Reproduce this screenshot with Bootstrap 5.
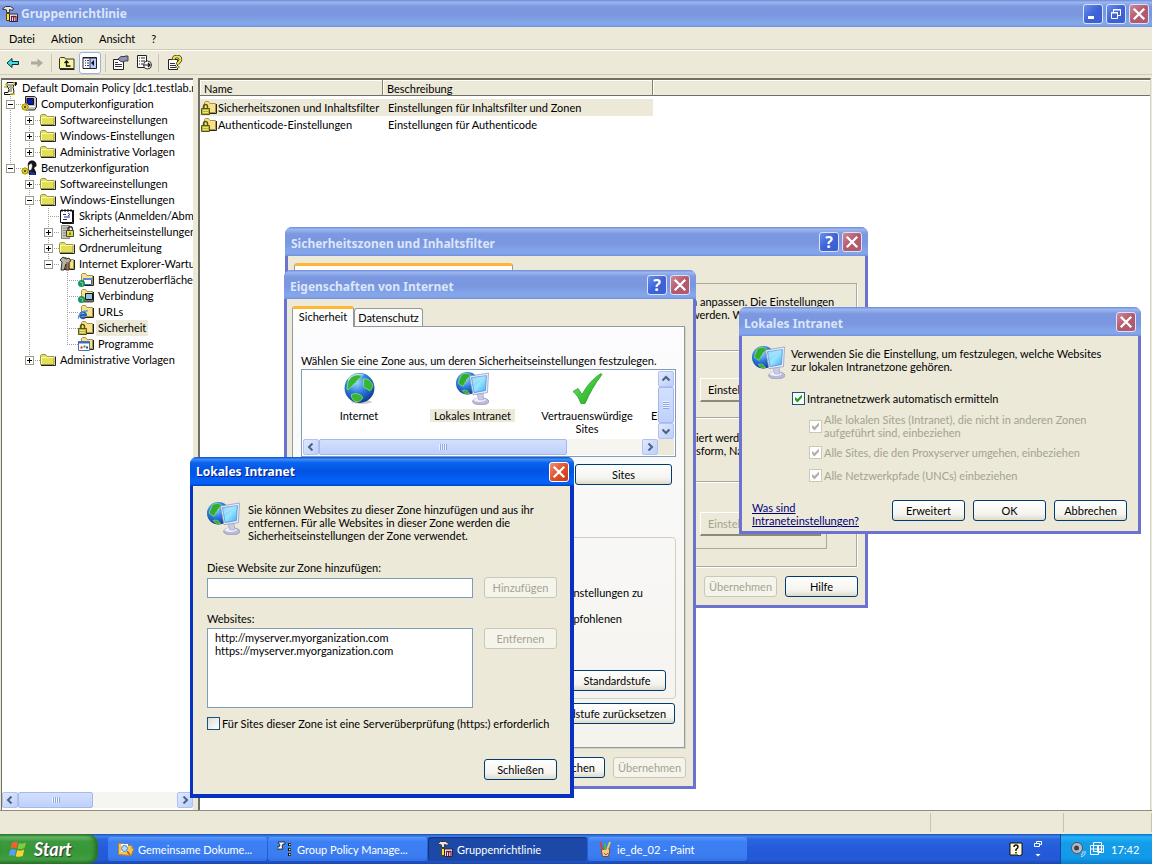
<!DOCTYPE html>
<html lang="de">
<head>
<meta charset="utf-8">
<meta name="viewport" content="width=device-width, initial-scale=1">
<title>Gruppenrichtlinie</title>
<link rel="stylesheet" href="https://cdn.jsdelivr.net/npm/bootstrap@5.3.0/dist/css/bootstrap.min.css">
<style>
:root{--face:#ece9d8;--line:#aca899;--ink:#000;--off:#a5a292}
body{font:11px/13px Lato,"Liberation Sans",sans-serif;font-variant-ligatures:none;color:var(--ink);background:var(--face);overflow:hidden}
button,input{font:inherit;font-variant-ligatures:none}
svg{flex:none;display:block}
/* title bars */
.capbar{height:29px;padding:0 5px;background:linear-gradient(#6f8bd8,#9bb6ef 8%,#7b98e0 24%,#7a96df 55%,#83a6ea 82%,#84a4ea 92%,#7290dc);color:#dce6fa;font:bold 12px/16px "Noto Sans",sans-serif}
.capbar.live{background:linear-gradient(#0a4fd0,#3c8df8 8%,#0b62ee 20%,#0054e4 50%,#0462f8 82%,#0360f2 92%,#0040b8);color:#fff;text-shadow:1px 1px #0a1883}
.cap{width:20px;height:20px;padding:0;border:1px solid #dbe3fa;border-radius:3px;background:linear-gradient(135deg,#6a90ee,#3f63d6 50%,#3a5fd2);display:flex;align-items:center;justify-content:center}
.cap.shut{background:linear-gradient(135deg,#cc8a96,#b4596c 50%,#b05a70)}
.live .cap.shut{border-color:#fff;background:linear-gradient(135deg,#f0906f,#e0502c 50%,#c83a12)}
/* menu and tool bar */
.menus{height:23px;padding-left:9px;gap:16px;border-bottom:1px solid #cfcbb8}
.menus a{color:#000;text-decoration:none}
.tools{height:25px;padding:0 5px;border-top:1px solid #fff;border-bottom:1px solid #cfcbb8}
.tool{border:0;background:none;padding:0;width:24px;height:22px;display:flex;align-items:center;justify-content:center}
.tool.on{border:1px solid #98b5e2;border-radius:3px;background:#fff;width:22px}
.tsep{width:1px;height:18px;background:#c9c5b2;margin:0 8px}
/* panes */
.panes{min-height:0;padding:3px 1px 0 1px}
.pane{background:#fff;border:solid #716f64;border-width:2px 0 0 2px}
.left{width:192px;border-width:2px 0 0 1px;overflow:hidden}
.right{margin-left:5px;border-right:1px solid #d8d5c6}
.node{height:16px;white-space:nowrap}
.guide{width:19px;height:16px;flex:none;position:relative;--d:repeating-linear-gradient(#a0a0a0 0 1px,#fff 1px 2px);--h:repeating-linear-gradient(90deg,#a0a0a0 0 1px,#fff 1px 2px)}
.guide.v{background:var(--d) 8px 0/1px 100% no-repeat}
.guide.t{background:var(--h) 8px 8px/11px 1px no-repeat,var(--d) 8px 0/1px 100% no-repeat}
.guide.e{background:var(--h) 8px 8px/11px 1px no-repeat,var(--d) 8px 0/1px 8px no-repeat}
.guide.p::before,.guide.m::before{content:"";position:absolute;left:4px;top:4px;width:9px;height:9px;border:1px solid #9a9a8c;background:linear-gradient(#000,#000) 1px 3px/5px 1px no-repeat,#fff}
.guide.p::before{background:linear-gradient(#000,#000) 1px 3px/5px 1px no-repeat,linear-gradient(#000,#000) 3px 1px/1px 5px no-repeat,#fff}
.ic{width:18px;flex:none}
.lbl{padding:1px 2px 2px}
.pick{background:var(--face)}
.list{border-collapse:separate;border-spacing:0;table-layout:fixed;width:100%}
.list th{font-weight:400;height:16px;padding:1px 4px 0;background:var(--face);border-right:1px solid #84826f;box-shadow:inset 1px 1px #fff;border-bottom:1px solid #716f64}
.list th:last-child{border-right:0}
.list td{height:17px;padding:0 4px 0 5px;white-space:nowrap}
.list td:first-child{padding-left:1px}
.list .gap td{height:3px;padding:0}
.sb{background:#f6f5f0}
.sbb{width:16px;height:16px;padding:0;border:1px solid #b0c2f2;border-radius:2px;background:linear-gradient(135deg,#e0e9fd,#bccffa);display:flex;align-items:center;justify-content:center}
.thumb{border:1px solid #a4b8ee;border-radius:2px;background:linear-gradient(#d3dffd,#bfd0fb);display:flex;align-items:center;justify-content:center}
.grip{width:8px;height:6px;background:repeating-linear-gradient(90deg,#eef4fe 0 1px,#8ea8e6 1px 2px)}
.grip.up{width:6px;height:8px;background:repeating-linear-gradient(#eef4fe 0 1px,#8ea8e6 1px 2px)}
.status{height:24px;border-top:1px solid #8f8c7d;padding-top:2px}
.status div{border-right:1px solid #c8c4b2;height:19px}
/* task bar */
.task{height:30px;background:linear-gradient(#1f4fae,#3b80ee 8%,#2a66dd 18%,#235bdb 50%,#2459d8 85%,#1c47b0)}
.start{width:98px;border:0;border-radius:0 10px 10px 0;padding:0 8px;background:linear-gradient(#2c7a2c,#67b867 10%,#3c9a3c 25%,#379637 60%,#3f9f3f 85%,#2b742b);color:#fff;font:italic bold 18px/20px Lato,sans-serif;text-shadow:1px 1px 1px #333;box-shadow:inset -3px 0 4px #2a6b2a}
.tb{flex:0 1 159px;height:24px;padding:0 9px;border:0;border-radius:3px;background:linear-gradient(#5a96f8,#3c80f5 20%,#3b7df0 80%,#3272e4);color:#fff;white-space:nowrap;gap:4px;margin-right:1px}
.tb.on{background:#1c49a8;box-shadow:inset 1px 1px 1px #123480}
.tray{width:92px;background:linear-gradient(#0c6fd0,#22b4f4 10%,#149ce8 30%,#129aea 80%,#0d7cc8);color:#fff;border-left:1px solid #0d4c9c;padding-left:9px}
/* dialogs */
.dlg{position:absolute;isolation:isolate;background:var(--face);border:solid #6c72d0;border-width:0 3px 3px;border-radius:7px 7px 0 0;display:flex;flex-direction:column}
.dlg .capbar{border-radius:7px 7px 0 0;margin:0 -3px;flex:none}
.dlg.act{border:solid #0831c4;border-width:0 4px 4px 3px}
.dlg.act .capbar{margin:0 -4px 0 -3px}
.xp{height:21px;width:73px;padding:0;border:1px solid #003c74;border-radius:3px;background:linear-gradient(#fff,#f4f3ee 70%,#dedacb);color:#000;font-size:11px;line-height:13px;white-space:nowrap}
.xp:disabled{border-color:#c9c7ba;background:#f5f4ea;color:var(--off);opacity:1}
.flatbtn{height:24px;width:121px;border:1px solid #fff;border-right-color:#716f64;border-bottom:2px solid #8d8a7b;background:var(--face);padding:0 7px;text-align:left;white-space:nowrap}
.flatbtn:disabled{color:var(--off)}
.fld{border:1px solid #7f9db9;background:#fff;border-radius:0;padding:0 6px;width:100%}
.ck{appearance:none;width:13px;height:13px;margin:0;border:1px solid #1c5180;background:linear-gradient(135deg,#dcdcd7,#fff);flex:none}
.ck:checked{background:url("data:image/svg+xml,%3Csvg xmlns='http://www.w3.org/2000/svg' viewBox='0 0 11 11'%3E%3Cpath d='M2 4v3l2.500 2.500L9 4.500v-3L4.500 6z' fill='%2321a121'/%3E%3C/svg%3E"),#fbfbf8}
.ck:disabled{border-color:#cac8bb;background:url("data:image/svg+xml,%3Csvg xmlns='http://www.w3.org/2000/svg' viewBox='0 0 11 11'%3E%3Cpath d='M2 4v3l2.500 2.500L9 4.500v-3L4.500 6z' fill='%23b4b2a4'/%3E%3C/svg%3E"),#fff}
.dim{color:var(--off)}
.tabx{border:1px solid #919b9c;border-bottom:0;background:#fbfbf9;border-radius:3px 3px 0 0;padding:0;height:18px;text-align:center;white-space:nowrap}
.tabx.on{border-top:3px solid #ffb733;background:#fdfdfe;height:21px;margin-bottom:-1px;padding-bottom:4px;z-index:1;position:relative}
.sheet{border:1px solid #919b9c;background:linear-gradient(#fcfcfe,#f4f3ee);box-shadow:1px 1px #d6d3c2}
.zone{flex:none;border:0;background:none;padding:1px 0 0;text-align:center}
.rule{border-top:1px solid #aca899;box-shadow:inset 0 1px #fff}
.grp{border:1px solid #d0d0bf;border-radius:4px}
#w1{left:285px;top:227px;width:583px;height:381px}
#w2{left:284px;top:270px;width:412px;height:519px}
#w3{left:739px;top:307px;width:402px;height:227px}
#w4{left:190px;top:457px;width:384px;height:341px}
</style>
</head>
<body class="vh-100 d-flex flex-column">
<svg width="0" height="0" class="position-absolute" aria-hidden="true"><defs>
<radialGradient id="gb" cx=".4" cy=".3" r=".8"><stop offset="0" stop-color="#9fd8ff"/><stop offset=".45" stop-color="#2d7fe0"/><stop offset="1" stop-color="#0a2a80"/></radialGradient>
<linearGradient id="gs" x1="0" y1="0" x2="1" y2="1"><stop offset="0" stop-color="#5fc4fb"/><stop offset=".5" stop-color="#9be4ff"/><stop offset="1" stop-color="#3fa8f0"/></linearGradient>
<linearGradient id="gc" x1="0" y1="0" x2="1" y2="1"><stop offset="0" stop-color="#8be08b"/><stop offset=".5" stop-color="#3fc83a"/><stop offset="1" stop-color="#1f9c1f"/></linearGradient>
<symbol id="folder" viewBox="0 0 16 16"><path d="M.5 12.500v-9l1-1h4l1.500 2h7v8z" fill="#e2de58" stroke="#9c9640"/><path d="M1.500 5.500h12" stroke="#fbfab0"/><path d="M1.500 5v7" stroke="#fbfab0"/><path d="M1 13.500h14.500V4.500" fill="none" stroke="#222"/></symbol>
<symbol id="yf" viewBox="0 0 16 16"><path d="M3.500 12.500v-10l1-1h3l1.500 2h5.500v9z" fill="#f7e28a" stroke="#a8914a"/><path d="M4 13.500h11.500V4" fill="none" stroke="#222"/></symbol>
<symbol id="lock" viewBox="0 0 16 16"><use href="#yf"/><path d="M2.500 9V6.500a2 2 0 0 1 4 0V9" fill="none" stroke="#5a5610" stroke-width="1.500"/><path d="M.5 8.500h8v6h-8z" fill="#b9b432" stroke="#5a5610"/><path d="M2 10.500h5M2 12.500h5" stroke="#e8e68a"/></symbol>
<symbol id="scroll" viewBox="0 0 16 16"><path d="M5 2.500h9.500v2H12l-1 3 1 4-1 3H2.500v-2H6l1-3-2-4z" fill="#fffde0" stroke="#111"/><path d="M6 5h5M7 7h3M8 9h2M7 11h3" stroke="#555"/><path d="M3 4.500h3M2 7h3M12 2v3M8 14h5" stroke="#c8b820" stroke-width="1.500"/><path d="M13.500 3v3" stroke="#111"/></symbol>
<symbol id="pc" viewBox="0 0 16 16"><path d="M4.500 .5h9l2 1.500v9l-2 3h-9z" fill="#c4c4c4" stroke="#222"/><path d="M6 2.500h6.500v6H6z" fill="#0a1ab0" stroke="#111"/><path d="M8 10.500h6" stroke="#fff"/><circle cx="4" cy="11" r="3" fill="#f3ea4a" stroke="#6b6410"/><path d="M0 11h8M4 7v8M1 8l6 6M7 8l-6 6" stroke="#d8cc2c" stroke-width="1.200"/><circle cx="4" cy="11" r="1" fill="#333"/></symbol>
<symbol id="user" viewBox="0 0 16 16"><path d="M7 7C6 3 8 .5 11 .5c3 0 5 2.500 4.500 5.500L13 8l2 4v3H8z" fill="#161616"/><path d="M7.500 5l3-2 1 3-1 4-3 .5z" fill="#fff" stroke="#222" stroke-width=".6"/><path d="M9 11l5 2v2H9z" fill="#2030a0"/><circle cx="4" cy="11" r="3" fill="#f3ea4a" stroke="#6b6410"/><path d="M0 11h8M4 7v8M1 8l6 6M7 8l-6 6" stroke="#d8cc2c" stroke-width="1.200"/><circle cx="4" cy="11" r="1" fill="#333"/></symbol>
<symbol id="script" viewBox="0 0 16 16"><path d="M1.500 2.500h12v12h-12z" fill="#fff" stroke="#111"/><path d="M14.500 2v13.500H3M3 1v3M6 1v3M9 1v3M12 1v3" fill="none" stroke="#111"/><path d="M4 6.500h3M5 9h6M4 11.500h4" stroke="#2a2a9a"/><path d="M9 5l2 1.500-2 1.500" fill="none" stroke="#2a2a9a"/></symbol>
<symbol id="srv" viewBox="0 0 16 16"><path d="M2.500 1.500h8v13h-8z" fill="#c9c5bb" stroke="#8a867c"/><path d="M4 4h5M4 6.500h5M4 9h5M4 11.500h5" stroke="#888"/><path d="M9 7V5a2 2 0 0 1 4.500 0v2" fill="none" stroke="#333" stroke-width="1.300"/><path d="M7.500 6.500h7v6h-7z" fill="#e4dc3c" stroke="#444"/><path d="M11 8.500v2.500" stroke="#222"/></symbol>
<symbol id="ie" viewBox="0 0 16 16"><use href="#yf"/><path d="M1 4l3-3 3 2 3-1 2 3-2 1v8H7V8L5 14H2l1-8z" fill="#b9b3a4" stroke="#222" stroke-width=".9"/><path d="M8 6v8M10 7v7" stroke="#7a3c14"/></symbol>
<symbol id="fui" viewBox="0 0 16 16"><use href="#yf"/><path d="M5.500 6.500h8v6h-8z" fill="#fff" stroke="#47628e"/><path d="M5 7h9" stroke="#5d8bd8" stroke-width="2"/><circle cx="3.500" cy="11.500" r="3.500" fill="#1b8d74"/><path d="M2 10l3 1-1 3" fill="none" stroke="#6fdc5a"/></symbol>
<symbol id="fvb" viewBox="0 0 16 16"><use href="#yf"/><path d="M7.500 5.500h7v6h-7z" fill="#8cc4e8" stroke="#111"/><path d="M6 13.500h9" stroke="#555" stroke-width="2"/><circle cx="3.500" cy="11.500" r="3.500" fill="#1b8d74"/><path d="M2 10l3 1-1 3" fill="none" stroke="#6fdc5a"/></symbol>
<symbol id="furl" viewBox="0 0 16 16"><use href="#yf"/><path d="M2 11h6a3 3 0 1 0-1 2.500" fill="none" stroke="#1f62c8" stroke-width="2"/><path d="M0 15c0-4 5-9 10-8" fill="none" stroke="#3f8be8" stroke-width="1.200"/></symbol>
<symbol id="fprg" viewBox="0 0 16 16"><use href="#yf"/><path d="M.5 5.500h11v9H.5z" fill="#fff" stroke="#5a6ea0"/><path d="M0 6.500h12" stroke="#3f68c8" stroke-width="2"/><path d="M2.500 11.500h2" stroke="#c03020" stroke-width="2"/><path d="M5.500 10.500h2" stroke="#2a9a3a" stroke-width="2"/><path d="M8 11.500h2" stroke="#204ac0" stroke-width="2"/></symbol>
<symbol id="mmc" viewBox="0 0 16 16"><path d="M.5 3l3-2.500h5l3 2-1 2-3-1v3h-3V4z" fill="#e6e6e6" stroke="#333"/><path d="M4.500 7.500h3v7h-3z" fill="#f4e63a" stroke="#4c480c"/><path d="M7.500 15.500V8h8v7.500z" fill="#fff" stroke="#35202c"/><path d="M9.500 15v-4.500h4.500V15M11.700 10v5" stroke="#6c1a3c" stroke-width="1.300" fill="none"/></symbol>
<symbol id="globe" viewBox="0 0 32 32"><ellipse cx="18" cy="29" rx="10" ry="2" fill="#ccc"/><circle cx="16" cy="15.500" r="14.500" fill="url(#gb)"/><path d="M7 5c4-3 8-3 11-1-1 3-5 3-5 6-2 2-3 1-4 4-2 0-3 4-5 3 0-5 1-9 3-12zM8 22c4-2 8-1 11 2 0 3-3 5-6 5-3-1-5-3-5-7zM20 7c5-1 7 2 9 6-1 4-3 6-4 5-1-3-4-1-5-4z" fill="#36b636" stroke="#b8f27a" stroke-width=".6"/><path d="M5 8c3-5 9-7 15-5" fill="none" stroke="#e2f6ff" stroke-width="1.200" opacity=".7"/></symbol>
<symbol id="net" viewBox="0 0 32 32"><circle cx="11" cy="11" r="11" fill="url(#gb)"/><path d="M5 3c3-2 7-2 9 0-1 3-4 3-4 6-2 1-2 3-3 5-2-1-3-2-5-3zM6 18c3-1 6 0 7 3-2 1-5 0-7-3z" fill="#2fae2f" stroke="#b8f27a" stroke-width=".5"/><ellipse cx="24" cy="28.500" rx="8" ry="3.500" fill="#b9bad6" stroke="#8c8eb4" stroke-width=".6"/><ellipse cx="23" cy="27" rx="6" ry="2" fill="#f1f1fa"/><path d="M20 20l6-1 1 8h-5z" fill="#c9cae4" stroke="#9193ba" stroke-width=".5"/><path d="M13 4l18.500-3-1 19-14 2z" fill="#eceefa" stroke="#8d92bd" stroke-width=".7"/><path d="M15 5.500l14.500-2-1 14.500-11 2z" fill="url(#gs)" stroke="#2d80cc" stroke-width=".6"/><path d="M16 12l12-8v-.3L15.600 5.600z" fill="#fff" opacity=".25"/></symbol>
<symbol id="tick" viewBox="0 0 32 32"><path d="M2 19l5-3 4 6C16 13 22 6 30 1l1 1C24 11 19 20 14 31h-4C8 26 6 22 2 19z" fill="url(#gc)" stroke="#2aa02a" stroke-width=".8"/></symbol>
<symbol id="x" viewBox="0 0 12 12"><path d="M1.500 1.500l9 9m0-9l-9 9" stroke="#fff" stroke-width="2"/></symbol>
<symbol id="al" viewBox="0 0 8 8"><path d="M5.500 .5L2 4l3.500 3.500" fill="none" stroke="#4d6185" stroke-width="2"/></symbol>
<symbol id="ar" viewBox="0 0 8 8"><path d="M2.500 .5L6 4 2.500 7.500" fill="none" stroke="#4d6185" stroke-width="2"/></symbol>
<symbol id="au" viewBox="0 0 8 8"><path d="M.5 5.500L4 2l3.500 3.500" fill="none" stroke="#4d6185" stroke-width="2"/></symbol>
<symbol id="ad" viewBox="0 0 8 8"><path d="M.5 2.500L4 6l3.500-3.500" fill="none" stroke="#4d6185" stroke-width="2"/></symbol>
</defs></svg>

<header class="capbar d-flex align-items-center" style="height:27px;padding:0 3px 0 2px">
  <svg width="16" height="16"><use href="#mmc"/></svg><span class="flex-grow-1" style="margin-left:3px">Gruppenrichtlinie</span>
  <div class="d-flex" style="gap:3px">
    <button class="cap" aria-label="Minimieren"><svg width="12" height="12"><path d="M1 8h6v3H1z" fill="#fff"/></svg></button>
    <button class="cap" aria-label="Wiederherstellen"><svg width="12" height="12"><path d="M3.500 4V1.500h7v6H8M3 2h8M1.500 4.500h6v6h-6zM1 5h7" fill="none" stroke="#fff"/></svg></button>
    <button class="cap shut" aria-label="Schließen"><svg width="14" height="14"><use href="#x"/></svg></button>
  </div>
</header>
<nav class="menus d-flex align-items-center flex-shrink-0"><a href="#">Datei</a><a href="#">Aktion</a><a href="#">Ansicht</a><a href="#">?</a></nav>
<div class="tools d-flex align-items-center flex-shrink-0">
  <button class="tool" style="width:16px" aria-label="Zurück"><svg width="14" height="12"><path d="M1 6l5-4.500V4.500h6.500v3H6v3z" fill="#3fe0ea" stroke="#0a2a3a"/></svg></button>
  <button class="tool ms-1" aria-label="Vorwärts"><svg width="16" height="12"><path d="M14 6L8.500 1.500v3H2v3h6.500v3z" fill="#aeab9c"/></svg></button>
  <span class="tsep" style="margin-left:2px;margin-right:3px"></span>
  <button class="tool" aria-label="Aufwärts"><svg width="16" height="16"><path d="M.5 13.500v-10l1-1h4l1 1.500h8.500v9.500z" fill="#fbf7a0" stroke="#333"/><path d="M1 14.500h14.500" stroke="#222"/><path d="M11.500 11h-4V6M5.500 8l2-2 2 2" fill="none" stroke="#111" stroke-width="1.300"/></svg></button>
  <button class="tool on" aria-label="Struktur"><svg width="16" height="14"><path d="M1 1.500h13.500v11H1z" fill="#fff" stroke="#222"/><path d="M8 2h6v10H8z" fill="#b9cdf2"/><path d="M1 2h14" stroke="#222"/><path d="M3 4.500h1M3 7h1M3 9.500h1M5 4.500h2M5 7h2M5 9.500h2M8 2v10" stroke="#2a3a7a"/><path d="M12 4v6L9 7z" fill="#111"/></svg></button>
  <span class="tsep" style="margin:0 2px 0 4px"></span>
  <button class="tool" aria-label="Eigenschaften"><svg width="17" height="16"><path d="M1.500 4.500h10v10h-10z" fill="#fff" stroke="#222"/><path d="M3 7.500h3M3 9.500h7M3 11.500h7" stroke="#333"/><path d="M6 4l3-2.500 4 0V1h3v5h-3l-2 1-3-1z" fill="#8f93b8" stroke="#222" stroke-width=".8"/></svg></button>
  <button class="tool" aria-label="Liste exportieren"><svg width="17" height="17"><path d="M1.500 1.500h9v12h-9z" fill="#fff" stroke="#222"/><path d="M3 4h1M5 4h4M3 7h1M5 7h4M3 10h1M5 10h2" stroke="#222"/><circle cx="11.500" cy="11" r="4" fill="#fff" stroke="#333"/><path d="M8 11h6M12 9l2 2-2 2" fill="none" stroke="#111" stroke-width="1.200"/></svg></button>
  <span class="tsep" style="margin:0 4px 0 2px"></span>
  <button class="tool" aria-label="Hilfe"><svg width="16" height="16"><path d="M1.500 4.500h9v10h-9z" fill="#fff" stroke="#222"/><path d="M3 8.500h5M3 10.500h6M3 12.500h6" stroke="#333"/><path d="M6.500 4.500c0-4 7-4 7 0 0 2.500-3 2.500-3 5M10.500 11v2" fill="none" stroke="#333" stroke-width="3.500"/><path d="M6.500 4.500c0-4 7-4 7 0 0 2.500-3 2.500-3 5M10.500 11v2" fill="none" stroke="#f2e43a" stroke-width="2"/></svg></button>
</div>

<main class="panes d-flex flex-grow-1">
  <aside class="pane left d-flex flex-column flex-shrink-0">
    <div class="flex-grow-1">
      <div class="node d-flex align-items-center"><span class="ic"><svg width="16" height="16"><use href="#scroll"/></svg></span><span class="lbl">Default Domain Policy [dc1.testlab.net]</span></div>
      <div class="node d-flex align-items-center"><i class="guide t m"></i><span class="ic"><svg width="16" height="16"><use href="#pc"/></svg></span><span class="lbl">Computerkonfiguration</span></div>
      <div class="node d-flex align-items-center"><i class="guide v"></i><i class="guide t p"></i><span class="ic"><svg width="16" height="16"><use href="#folder"/></svg></span><span class="lbl">Softwareeinstellungen</span></div>
      <div class="node d-flex align-items-center"><i class="guide v"></i><i class="guide t p"></i><span class="ic"><svg width="16" height="16"><use href="#folder"/></svg></span><span class="lbl">Windows-Einstellungen</span></div>
      <div class="node d-flex align-items-center"><i class="guide v"></i><i class="guide e p"></i><span class="ic"><svg width="16" height="16"><use href="#folder"/></svg></span><span class="lbl">Administrative Vorlagen</span></div>
      <div class="node d-flex align-items-center"><i class="guide e m"></i><span class="ic"><svg width="16" height="16"><use href="#user"/></svg></span><span class="lbl">Benutzerkonfiguration</span></div>
      <div class="node d-flex align-items-center"><i class="guide"></i><i class="guide t p"></i><span class="ic"><svg width="16" height="16"><use href="#folder"/></svg></span><span class="lbl">Softwareeinstellungen</span></div>
      <div class="node d-flex align-items-center"><i class="guide"></i><i class="guide t m"></i><span class="ic"><svg width="16" height="16"><use href="#folder"/></svg></span><span class="lbl">Windows-Einstellungen</span></div>
      <div class="node d-flex align-items-center"><i class="guide"></i><i class="guide v"></i><i class="guide t"></i><span class="ic"><svg width="16" height="16"><use href="#script"/></svg></span><span class="lbl">Skripts (Anmelden/Abmelden)</span></div>
      <div class="node d-flex align-items-center"><i class="guide"></i><i class="guide v"></i><i class="guide t p"></i><span class="ic"><svg width="16" height="16"><use href="#srv"/></svg></span><span class="lbl">Sicherheitseinstellungen</span></div>
      <div class="node d-flex align-items-center"><i class="guide"></i><i class="guide v"></i><i class="guide t p"></i><span class="ic"><svg width="16" height="16"><use href="#folder"/></svg></span><span class="lbl">Ordnerumleitung</span></div>
      <div class="node d-flex align-items-center"><i class="guide"></i><i class="guide v"></i><i class="guide e m"></i><span class="ic"><svg width="16" height="16"><use href="#ie"/></svg></span><span class="lbl">Internet Explorer-Wartung</span></div>
      <div class="node d-flex align-items-center"><i class="guide"></i><i class="guide v"></i><i class="guide"></i><i class="guide t"></i><span class="ic"><svg width="16" height="16"><use href="#fui"/></svg></span><span class="lbl">Benutzeroberfläche</span></div>
      <div class="node d-flex align-items-center"><i class="guide"></i><i class="guide v"></i><i class="guide"></i><i class="guide t"></i><span class="ic"><svg width="16" height="16"><use href="#fvb"/></svg></span><span class="lbl">Verbindung</span></div>
      <div class="node d-flex align-items-center"><i class="guide"></i><i class="guide v"></i><i class="guide"></i><i class="guide t"></i><span class="ic"><svg width="16" height="16"><use href="#furl"/></svg></span><span class="lbl">URLs</span></div>
      <div class="node d-flex align-items-center"><i class="guide"></i><i class="guide v"></i><i class="guide"></i><i class="guide t"></i><span class="ic"><svg width="16" height="16"><use href="#lock"/></svg></span><span class="lbl pick">Sicherheit</span></div>
      <div class="node d-flex align-items-center"><i class="guide"></i><i class="guide v"></i><i class="guide"></i><i class="guide e"></i><span class="ic"><svg width="16" height="16"><use href="#fprg"/></svg></span><span class="lbl">Programme</span></div>
      <div class="node d-flex align-items-center"><i class="guide"></i><i class="guide e p"></i><span class="ic"><svg width="16" height="16"><use href="#folder"/></svg></span><span class="lbl">Administrative Vorlagen</span></div>
    </div>
    <div class="sb d-flex" style="margin-bottom:2px">
      <button class="sbb" aria-label="Nach links"><svg width="8" height="8"><use href="#al"/></svg></button>
      <div class="thumb" style="width:75px"><i class="grip"></i></div>
      <button class="sbb ms-auto" aria-label="Nach rechts"><svg width="8" height="8"><use href="#ar"/></svg></button>
    </div>
  </aside>
  <section class="pane right flex-grow-1">
    <table class="list">
      <colgroup><col style="width:183px"><col style="width:270px"><col></colgroup>
      <thead><tr><th>Name</th><th>Beschreibung</th><th></th></tr></thead>
      <tbody>
        <tr class="gap"><td></td><td></td><td></td></tr>
        <tr><td class="pick"><div class="d-flex align-items-center"><svg width="16" height="16"><use href="#lock"/></svg><span style="padding-left:1px">Sicherheitszonen und Inhaltsfilter</span></div></td><td class="pick">Einstellungen für Inhaltsfilter und Zonen</td><td></td></tr>
        <tr><td><div class="d-flex align-items-center"><svg width="16" height="16"><use href="#lock"/></svg><span style="padding-left:1px">Authenticode-Einstellungen</span></div></td><td>Einstellungen für Authenticode</td><td></td></tr>
      </tbody>
    </table>
  </section>
</main>
<div class="status d-flex flex-shrink-0"><div class="flex-grow-1"></div><div style="width:133px"></div><div style="width:88px"></div></div>

<footer class="task d-flex align-items-stretch flex-shrink-0">
  <button class="start d-flex align-items-center"><svg width="20" height="20"><path d="M4 4q3-2 6-.5L8.500 9.500Q6 8 2.500 9.500z" fill="#f0622c"/><path d="M11 4q3 1.500 7-.5L16.500 9q-3.500 2-7 .5z" fill="#7ccc3c"/><path d="M2.200 11q3-1.500 6-.3L6.700 17Q4 15.500.7 17z" fill="#5b9cf4"/><path d="M9.300 11q3.500 1.500 7-.4L14.700 17q-3.500 1.500-7 .3z" fill="#fcd232"/></svg><span style="margin-left:6px">Start</span></button>
  <nav class="d-flex align-items-center flex-grow-1" style="padding-left:10px">
    <button class="tb d-flex align-items-center"><svg width="17" height="16"><path d="M1.500 13.500v-11h5l1.500 2h7v3l2 0-3 7z" fill="#f5c451" stroke="#b8842a"/><path d="M4 3h7v8H4z" fill="#fff"/><circle cx="7.500" cy="7.500" r="3" fill="#b5dcf8" stroke="#4a7ab8"/><path d="M10 10l3 4" stroke="#b8621a" stroke-width="1.500"/></svg>Gemeinsame Dokume...</button>
    <button class="tb d-flex align-items-center"><svg width="16" height="16"><path d="M1 1h7v2H6l-1 2 1 3H0V6h2L3 4z" fill="#fff" stroke="#111" stroke-width=".8"/><path d="M12.500 2v14" stroke="#111" stroke-width="3" stroke-dasharray="3 2"/><path d="M12 3.500h1.500M12 8.500h1.500M12 13.500h1.500" stroke="#e9f14a" stroke-width="1.500"/></svg>Group Policy Manage...</button>
    <button class="tb on d-flex align-items-center"><svg width="16" height="16"><use href="#mmc"/></svg>Gruppenrichtlinie</button>
    <button class="tb d-flex align-items-center"><svg width="16" height="16"><path d="M4 8h9l-1.500 7.500h-6z" fill="#e9c99a" stroke="#7c4b20"/><path d="M6 9L3 1" stroke="#d8452c" stroke-width="2"/><path d="M8 9V2" stroke="#4bb34b" stroke-width="2"/><path d="M10 9l3-8" stroke="#f1d24b" stroke-width="2"/><path d="M7 12l2 2 2-2" stroke="#d8452c" fill="none"/></svg>ie_de_02 - Paint</button>
    <svg class="ms-auto" width="14" height="14"><path d="M1 1h12v12h-1l-2 1-1-1H1z" fill="#fffbd8" stroke="#111"/><path d="M5 5q0-2 2-2t2 2q0 1-2 2.500V9M7 10v1.500" fill="none" stroke="#111" stroke-width="1.500"/></svg>
    <svg width="10" height="18" style="margin:0 17px 0 10px"><path d="M3.500 3V1.500h5v3H7M1.500 3.500h5v3h-5z" fill="none" stroke="#fff"/><path d="M2.500 14h5L5 16.500z" fill="#fff"/></svg>
  </nav>
  <div class="tray d-flex align-items-center"><svg width="17" height="16"><circle cx="7" cy="7" r="5.500" fill="#b9bcc4" stroke="#4c5260"/><circle cx="6.500" cy="7" r="2.500" fill="#39404e"/><path d="M13 10q1 3-2 4M15 10q1 5-4 5.500" fill="none" stroke="#d5e2f4"/></svg><svg width="17" height="16" style="margin-left:2px"><path d="M4.500 1.500h8v9h-8zM1.500 4.500h8v9h-8zM8.500 4.500h6v7h-6zM2 8h12" fill="none" stroke="#fff"/></svg><span style="margin-left:5px">17:42</span></div>
</footer>

<section class="dlg" id="w1">
  <div class="capbar d-flex align-items-center" style="padding-left:6px;padding-right:6px"><span class="flex-grow-1 pt-1">Sicherheitszonen und Inhaltsfilter</span><div class="d-flex" style="gap:3px"><button class="cap" aria-label="Hilfe"><span style="color:#fff;font-size:16px">?</span></button><button class="cap shut" aria-label="Schließen"><svg width="14" height="14"><use href="#x"/></svg></button></div></div>
  <div class="d-flex" style="padding:7px 0 0 6px"><button class="tabx on" style="width:219px;padding-bottom:0">Sicherheitszonen und Datenschutzeinstellungen</button></div>
  <div class="ms-2 text-nowrap" style="border:1px solid #aca899;box-shadow:1px 1px #fff;width:561px;height:284px;padding:11px 29px 0 0">
    <div style="padding-left:394px;height:55px">n anpassen. Die Einstellungen<br>werden. Wählen Sie</div>
    <div class="rule" style="border-right:1px solid #aca899;height:199px;border-bottom:1px solid #aca899;padding-left:403px">
      <button class="flatbtn" style="margin-top:27px">Einstellungen ändern...</button>
      <div class="rule" style="margin:15px 0 0 -403px;height:64px;padding:13px 0 0 395px">tiert werden,<br>tsform, Name</div>
      <div class="rule" style="margin-left:-403px;padding:30px 0 0 403px"><button class="flatbtn" disabled>Einstellungen ändern...</button></div>
    </div>
  </div>
  <div class="d-flex justify-content-end gap-2" style="padding:9px 7px 0 0"><button class="xp" disabled>Übernehmen</button><button class="xp">Hilfe</button></div>
</section>

<section class="dlg" id="w2">
  <div class="capbar d-flex align-items-center" style="padding-left:6px;padding-right:6px"><span class="flex-grow-1 pt-1">Eigenschaften von Internet</span><div class="d-flex" style="gap:3px"><button class="cap" aria-label="Hilfe"><span style="color:#fff;font-size:16px">?</span></button><button class="cap shut" aria-label="Schließen"><svg width="14" height="14"><use href="#x"/></svg></button></div></div>
  <div class="d-flex align-items-end" style="padding:7px 0 0 5px"><button class="tabx on" style="width:62px">Sicherheit</button><button class="tabx" style="width:69px">Datenschutz</button></div>
  <div class="sheet" style="margin:0 8px 0 5px;height:422px;padding:27px 8px 0">
    <div>Wählen Sie eine Zone aus, um deren Sicherheitseinstellungen festzulegen.</div>
    <div class="fld d-flex" style="height:88px;padding:1px;margin-top:2px">
      <div class="d-flex flex-column flex-grow-1" style="min-width:0">
        <div class="d-flex align-items-start overflow-hidden flex-grow-1">
          <button class="zone" style="width:112px"><svg class="mx-auto" width="33" height="33"><use href="#globe"/></svg><span class="d-inline-block px-1 mt-1">Internet</span></button>
          <button class="zone" style="width:115px"><svg class="mx-auto" width="33" height="33"><use href="#net"/></svg><span class="d-inline-block px-1 mt-1 pick">Lokales Intranet</span></button>
          <button class="zone" style="width:114px"><svg class="mx-auto" width="32" height="33"><use href="#tick"/></svg><span class="d-inline-block px-1 mt-1">Vertrauenswürdige<br>Sites</span></button>
          <button class="zone" style="width:115px;padding-left:7px;text-align:left"><svg width="1" height="33"></svg><span class="d-inline-block mt-1">Eingeschränkte</span></button>
        </div>
        <div class="sb d-flex flex-shrink-0"><button class="sbb" aria-label="Nach links"><svg width="8" height="8"><use href="#al"/></svg></button><div class="thumb" style="width:248px"><i class="grip"></i></div><button class="sbb ms-auto" aria-label="Nach rechts"><svg width="8" height="8"><use href="#ar"/></svg></button></div>
      </div>
      <div class="d-flex flex-column sb" style="width:16px"><button class="sbb" aria-label="Nach oben"><svg width="8" height="8"><use href="#au"/></svg></button><div class="thumb flex-grow-1"><i class="grip up"></i></div><button class="sbb" aria-label="Nach unten"><svg width="8" height="8"><use href="#ad"/></svg></button><div style="height:16px;background:#ece9d8"></div></div>
    </div>
    <div class="text-end" style="padding:7px 4px 0 0"><button class="xp" style="width:97px">Sites</button></div>
    <div class="grp text-end" style="margin-top:52px;height:162px;padding:48px 9px 0">
      <div style="padding-right:23px">Wählen Sie eine Stufe, um die Einstellungen zu</div>
      <div style="padding:13px 44px 0 0">Verwenden Sie die empfohlenen</div>
      <button class="xp" style="width:98px;margin-top:45px">Standardstufe</button>
    </div>
    <div class="text-end pt-1" style="padding-right:1px"><button class="xp" style="width:224px">Alle Zonen auf Standardstufe zurücksetzen</button></div>
  </div>
  <div class="d-flex justify-content-end gap-2" style="padding:9px 7px 0 0"><button class="xp">Abbrechen</button><button class="xp" disabled>Übernehmen</button></div>
</section>

<section class="dlg" id="w3">
  <div class="capbar d-flex align-items-center"><span class="flex-grow-1 pt-1">Lokales Intranet</span><button class="cap shut" aria-label="Schließen"><svg width="14" height="14"><use href="#x"/></svg></button></div>
  <div class="d-flex flex-column flex-grow-1" style="padding:10px 11px 10px 10px">
    <div class="d-flex"><svg width="33" height="33"><use href="#net"/></svg><div style="padding:1px 0 0 6px">Verwenden Sie die Einstellung, um festzulegen, welche Websites<br>zur lokalen Intranetzone gehören.</div></div>
    <div class="d-flex align-items-center" style="margin:13px 0 0 40px;gap:2px"><input class="ck" type="checkbox" id="c1" checked><label for="c1">Intranetnetzwerk automatisch ermitteln</label></div>
    <div class="dim d-flex flex-column" style="margin:8px 0 0 57px">
      <div class="d-flex align-items-center" style="gap:2px"><input class="ck" type="checkbox" id="c2" checked disabled><label for="c2">Alle lokalen Sites (Intranet), die nicht in anderen Zonen<br>aufgeführt sind, einbeziehen</label></div>
      <div class="d-flex align-items-center" style="gap:2px;margin-top:7px"><input class="ck" type="checkbox" id="c3" checked disabled><label for="c3">Alle Sites, die den Proxyserver umgehen, einbeziehen</label></div>
      <div class="d-flex align-items-center" style="gap:2px;margin-top:10px"><input class="ck" type="checkbox" id="c4" checked disabled><label for="c4">Alle Netzwerkpfade (UNCs) einbeziehen</label></div>
    </div>
    <div class="d-flex gap-2 mt-auto align-items-end"><a href="#" class="me-auto" style="color:#00007c;margin-bottom:-6px">Was sind <br>Intraneteinstellungen?</a><button class="xp">Erweitert</button><button class="xp">OK</button><button class="xp">Abbrechen</button></div>
  </div>
</section>

<section class="dlg act" id="w4">
  <div class="capbar live d-flex align-items-center" style="padding-left:6px"><span class="flex-grow-1">Lokales Intranet</span><button class="cap shut" aria-label="Schließen"><svg width="14" height="14"><use href="#x"/></svg></button></div>
  <div class="d-flex flex-column flex-grow-1" style="padding:16px 13px 14px 14px">
    <div class="d-flex"><svg width="33" height="33"><use href="#net"/></svg><div style="padding:1px 0 0 8px">Sie können Websites zu dieser Zone hinzufügen und aus ihr<br>entfernen. Für alle Websites in dieser Zone werden die<br>Sicherheitseinstellungen der Zone verwendet.</div></div>
    <label for="url" style="margin-top:19px">Diese Website zur Zone hinzufügen:</label>
    <div class="d-flex align-items-center" style="gap:11px;margin-top:3px"><input class="fld flex-grow-1" style="height:20px;width:0" id="url"><button class="xp" disabled>Hinzufügen</button></div>
    <label for="sites" style="margin-top:14px">Websites:</label>
    <div class="d-flex" style="gap:11px;margin-top:3px"><textarea class="fld flex-grow-1" id="sites" readonly style="height:80px;width:0;padding:2px 7px;resize:none;font:inherit;font-variant-ligatures:none">http://myserver.myorganization.com
https://myserver.myorganization.com</textarea><button class="xp" disabled>Entfernen</button></div>
    <div class="d-flex align-items-center" style="margin-top:9px;gap:2px"><input class="ck" type="checkbox" id="c5"><label for="c5">Für Sites dieser Zone ist eine Serverüberprüfung (https:) erforderlich</label></div>
    <button class="xp mt-auto ms-auto">Schließen</button>
  </div>
</section>
<script src="https://cdn.jsdelivr.net/npm/bootstrap@5.3.0/dist/js/bootstrap.bundle.min.js"></script>
</body>
</html>
